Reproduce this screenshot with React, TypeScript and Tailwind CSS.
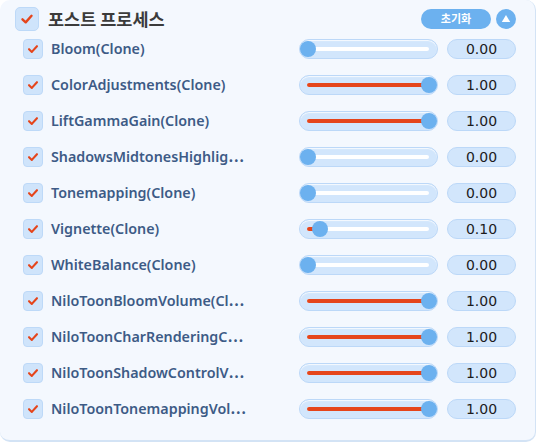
import React from "react";

type Effect = { label: string; value: number };

// labels are cut the way the editor shows them, with a centred ellipsis
const effects: Effect[] = [
  { label: "Bloom(Clone)", value: 0 },
  { label: "ColorAdjustments(Clone)", value: 1 },
  { label: "LiftGammaGain(Clone)", value: 1 },
  { label: "ShadowsMidtonesHighlig⋯", value: 0 },
  { label: "Tonemapping(Clone)", value: 0 },
  { label: "Vignette(Clone)", value: 0.1 },
  { label: "WhiteBalance(Clone)", value: 0 },
  { label: "NiloToonBloomVolume(Cl⋯", value: 1 },
  { label: "NiloToonCharRenderingC⋯", value: 1 },
  { label: "NiloToonShadowControlV⋯", value: 1 },
  { label: "NiloToonTonemappingVol⋯", value: 1 },
];

function Check({ size }: { size: number }) {
  return (
    <svg width={size} height={size} viewBox="0 0 12 12" fill="none">
      <path d="M2.6 6.2 L5 8.5 L9.4 3.6" stroke="#e5451b" strokeWidth="1.8" strokeLinecap="round" strokeLinejoin="round" />
    </svg>
  );
}

function Slider({ value }: { value: number }) {
  // knob travels from 9px to 130px inside the 139px track
  const knobX = 9 + value * 121;
  return (
    <div className="relative w-[139px] h-5 rounded-full bg-[#d2e6fc] border border-[#bcd8f8] shadow-[inset_0_1px_1px_rgba(255,255,255,0.8)]">
      <div className="absolute left-[7px] right-[8px] top-1/2 -translate-y-1/2 h-[4px] rounded-full bg-white" />
      <div
        className="absolute left-[7px] top-1/2 -translate-y-1/2 h-[4px] rounded-full bg-[#e5451b]"
        style={{ width: knobX - 7 }}
      />
      <div
        className="absolute top-1/2 -translate-y-1/2 -translate-x-1/2 w-4 h-4 rounded-full bg-[#6cb1ef]"
        style={{ left: knobX - 1 }}
      />
    </div>
  );
}

export default function App() {
  return (
    <div className="w-[537px] h-[443px] bg-white">
      <div className="w-[536px] h-[442px] rounded-[10px] bg-[#f4f8fe] border-r border-b-2 border-[#d3e3f5] font-['Noto_Sans','Noto_Sans_CJK_KR',sans-serif]">
        {/* Header */}
        <div className="flex items-center h-[31px] pt-[6px] pl-[15px] pr-[19px]">
          <div className="w-6 h-6 rounded-[5px] bg-[#cfe4fb] border border-[#bdd9f8] flex items-center justify-center">
            <Check size={16} />
          </div>
          <span className="ml-[9px] text-[17.5px] font-bold text-[#3b3b3b] leading-none font-['Noto_Sans_CJK_KR',sans-serif]">
            포스트 프로세스
          </span>
          <button
            type="button"
            className="ml-auto w-[70px] h-5 rounded-full bg-[#6cb1ef] text-white text-[11px] font-bold leading-none font-['Noto_Sans_CJK_KR',sans-serif]"
          >
            초기화
          </button>
          <button
            type="button"
            className="ml-[5px] w-5 h-5 rounded-full bg-[#6cb1ef] flex items-center justify-center"
          >
            <svg width="10" height="9" viewBox="0 0 10 9">
              <path d="M5 1 L9.2 8 L0.8 8 Z" fill="white" />
            </svg>
          </button>
        </div>

        {/* Rows */}
        <div className="flex flex-col">
          {effects.map((e) => (
            <div key={e.label} className="flex items-center h-9 pl-[23px]">
              <div className="w-5 h-5 shrink-0 rounded-[4px] bg-[#cfe4fb] border border-[#bdd9f8] flex items-center justify-center">
                <Check size={14} />
              </div>
              <span className="ml-2 w-[248px] whitespace-nowrap text-[14.3px] font-semibold text-[#3d5b86] leading-none py-1">
                {e.label}
              </span>
              <Slider value={e.value} />
              <div className="ml-[9px] w-[69px] h-5 rounded-full bg-[#d2e6fc] border border-[#bcd8f8] flex items-center justify-center text-[14px] text-[#1c1c1c] font-['DejaVu_Sans',sans-serif] leading-none">
                {e.value.toFixed(2)}
              </div>
            </div>
          ))}
        </div>
      </div>
    </div>
  );
}
